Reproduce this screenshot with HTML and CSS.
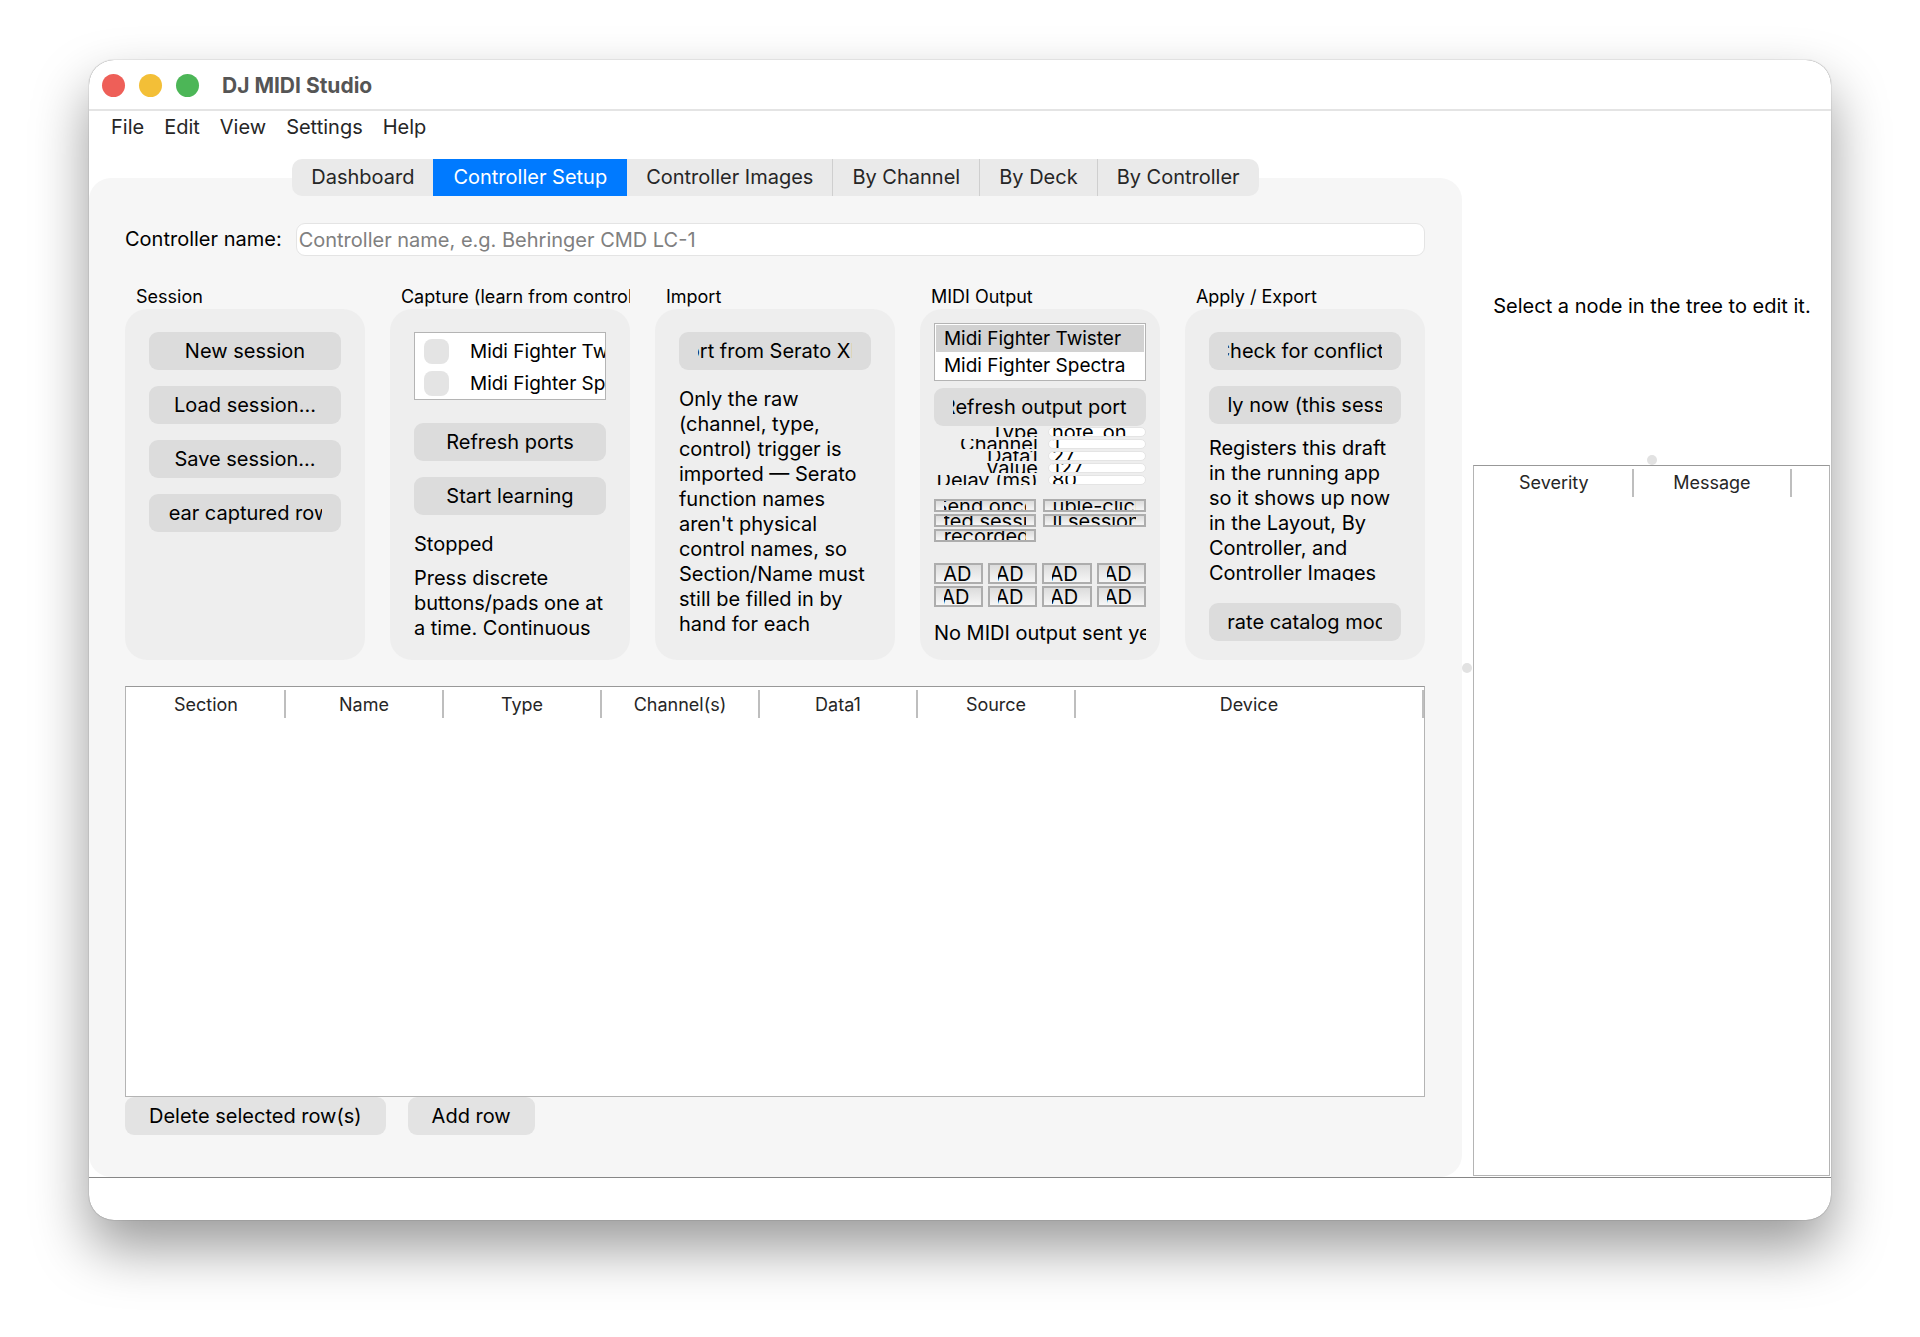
FILE: index.html
```html
<!DOCTYPE html>
<html lang="en">
<head>
  <meta charset="UTF-8" />
  <meta name="viewport" content="width=device-width, initial-scale=1" />
  <title>DJ MIDI Studio</title>
  <link rel="stylesheet" href="styles.css">
</head>
<body>

  <div class="window">
    <header class="titlebar">
      <button class="light red" aria-label="Close"></button>
      <button class="light yellow" aria-label="Minimize"></button>
      <button class="light green" aria-label="Zoom"></button>
      <h1>DJ MIDI Studio</h1>
    </header>

    <nav class="menubar">
      <button>File</button>
      <button>Edit</button>
      <button>View</button>
      <button>Settings</button>
      <button>Help</button>
    </nav>

    <div class="workspace">
      <main class="main">
        <div class="tabs" role="tablist">
          <button role="tab">Dashboard</button>
          <button role="tab" class="active" aria-selected="true">Controller Setup</button>
          <button role="tab">Controller Images</button>
          <button role="tab">By Channel</button>
          <button role="tab">By Deck</button>
          <button role="tab">By Controller</button>
        </div>

        <div class="pane">
          <div class="name-row">
            <label for="controller-name">Controller name:</label>
            <input type="text" id="controller-name" placeholder="Controller name, e.g. Behringer CMD LC-1">
          </div>

          <div class="groups">
            <section class="group">
              <h2>Session</h2>
              <div class="box">
                <button class="btn"><span>New session</span></button>
                <button class="btn"><span>Load session...</span></button>
                <button class="btn"><span>Save session...</span></button>
                <button class="btn"><span>Clear captured rows</span></button>
              </div>
            </section>

            <section class="group">
              <h2>Capture (learn from controller)</h2>
              <div class="box">
                <div class="ports">
                  <label><input type="checkbox"> Midi Fighter Twister</label>
                  <label><input type="checkbox"> Midi Fighter Spectra</label>
                </div>
                <button class="btn"><span>Refresh ports</span></button>
                <button class="btn"><span>Start learning</span></button>
                <p class="status">Stopped</p>
                <p class="note">Press discrete buttons/pads one at a time. Continuous</p>
              </div>
            </section>

            <section class="group">
              <h2>Import</h2>
              <div class="box">
                <button class="btn"><span>Import from Serato XML...</span></button>
                <p class="note">Only the raw (channel, type, control) trigger is imported — Serato function names aren't physical control names, so Section/Name must still be filled in by hand for each</p>
              </div>
            </section>

            <section class="group">
              <h2>MIDI Output</h2>
              <div class="box output">
                <ul class="devices">
                  <li class="selected">Midi Fighter Twister</li>
                  <li>Midi Fighter Spectra</li>
                </ul>
                <button class="btn"><span>Refresh output ports</span></button>
                <div class="fields">
                  <label for="msg-type">Type</label>
                  <input type="text" id="msg-type" value="note_on">
                  <label for="msg-channel">Channel</label>
                  <input type="text" id="msg-channel" value="1">
                  <label for="msg-data1">Data1</label>
                  <input type="text" id="msg-data1" value="27">
                  <label for="msg-value">Value</label>
                  <input type="text" id="msg-value" value="127">
                  <label for="msg-delay">Delay (ms)</label>
                  <input type="text" id="msg-delay" value="80">
                </div>
                <div class="sends">
                  <button class="mini"><span>Send once</span></button>
                  <button class="mini"><span>Double-click...</span></button>
                  <button class="mini"><span>Selected sessions...</span></button>
                  <button class="mini"><span>All sessions</span></button>
                  <button class="mini"><span>Send recorded rows</span></button>
                </div>
                <div class="pads">
                  <button class="mini"><span>PAD 1</span></button>
                  <button class="mini"><span>PAD 2</span></button>
                  <button class="mini"><span>PAD 3</span></button>
                  <button class="mini"><span>PAD 4</span></button>
                  <button class="mini"><span>PAD 5</span></button>
                  <button class="mini"><span>PAD 6</span></button>
                  <button class="mini"><span>PAD 7</span></button>
                  <button class="mini"><span>PAD 8</span></button>
                </div>
                <p class="sent">No MIDI output sent yet</p>
              </div>
            </section>

            <section class="group">
              <h2>Apply / Export</h2>
              <div class="box">
                <button class="btn"><span>Check for conflicts</span></button>
                <button class="btn"><span>Apply now (this session)</span></button>
                <p class="note short">Registers this draft in the running app so it shows up now in the Layout, By Controller, and Controller Images</p>
                <button class="btn last"><span>Generate catalog module...</span></button>
              </div>
            </section>
          </div>

          <div class="table-frame">
            <table>
              <thead>
                <tr>
                  <th>Section</th>
                  <th>Name</th>
                  <th>Type</th>
                  <th>Channel(s)</th>
                  <th>Data1</th>
                  <th>Source</th>
                  <th class="rest">Device</th>
                </tr>
              </thead>
            </table>
          </div>

          <div class="row-actions">
            <button class="btn">Delete selected row(s)</button>
            <button class="btn">Add row</button>
          </div>
        </div>
      </main>

      <div class="splitter"></div>

      <aside class="side">
        <div class="detail">Select a node in the tree to edit it.</div>
        <div class="splitter"></div>
        <div class="table-frame issues">
          <table>
            <thead>
              <tr>
                <th>Severity</th>
                <th>Message</th>
                <th class="rest"></th>
              </tr>
            </thead>
          </table>
        </div>
      </aside>
    </div>

    <footer class="statusbar"></footer>
  </div>

</body>
</html>
```
FILE: styles.css
```css
* {
  box-sizing: border-box;
}

body {
  margin: 0;
  min-height: 100vh;
  padding: 60px 89px 117px;
  display: flex;
  background: #fff;
  color: #000;
  font-family: Inter, "Liberation Sans", sans-serif;
  font-size: 20px;
  line-height: 25px;
}

h1,
h2,
p,
ul {
  margin: 0;
  padding: 0;
}

button,
input {
  font: inherit;
  color: inherit;
  margin: 0;
  padding: 0;
  border: none;
}

.window {
  flex: 1;
  min-width: 0;
  display: flex;
  flex-direction: column;
  background: #fff;
  border-radius: 25px;
  overflow: hidden;
  box-shadow: 0 0 1px rgba(0, 0, 0, 0.6), 0 28px 56px rgba(0, 0, 0, 0.4);
}

.titlebar {
  display: flex;
  align-items: center;
  gap: 14px;
  height: 51px;
  padding: 2px 0 0 13px;
  border-bottom: 2px solid #e4e4e4;
}

.light {
  width: 23px;
  height: 23px;
  border-radius: 50%;
}

.red { background: #ee5f58; }
.yellow { background: #f3bf37; }
.green { background: #4cb657; }

.titlebar h1 {
  margin-left: 9px;
  font-size: 21px;
  font-weight: 700;
  color: #555;
}

.menubar {
  display: flex;
  gap: 20px;
  height: 33px;
  padding-left: 22px;
}

.menubar button {
  background: none;
  color: #262626;
}

.workspace {
  flex: 1;
  display: grid;
  grid-template-columns: minmax(0, 23fr) 11px minmax(0, 6fr);
  margin-top: 15px;
}

.main {
  display: flex;
  flex-direction: column;
}

/* the tab bar straddles the top edge of the pane */
.tabs {
  position: relative;
  z-index: 1;
  align-self: center;
  display: flex;
  height: 37px;
  margin-bottom: -18px;
  border-radius: 10px;
  overflow: hidden;
  background: #eaeaea;
}

.tabs button {
  padding: 0 19px;
  background: none;
  color: #262626;
}

.tabs button + button {
  border-left: 1px solid #cfcfcf;
}

.tabs .active,
.tabs .active + button {
  border-left: none;
}

.tabs .active {
  padding: 0 20px;
  background: #007aff;
  color: #fff;
}

.pane {
  flex: 1;
  display: flex;
  flex-direction: column;
  padding: 45px 37px 42px 36px;
  background: #f6f6f6;
  border-radius: 22px;
}

.name-row {
  display: flex;
  align-items: center;
  gap: 14px;
}

.name-row input {
  flex: 1;
  height: 33px;
  padding: 0 2px;
  background: #fff;
  border: 1px solid #e4e4e4;
  border-radius: 9px;
}

.name-row input::placeholder {
  color: #808080;
}

.groups {
  display: grid;
  grid-template-columns: repeat(5, minmax(0, 1fr));
  gap: 25px;
  margin-top: 29px;
}

.group {
  display: flex;
  flex-direction: column;
}

.group h2 {
  padding-left: 11px;
  font-size: 18px;
  font-weight: 400;
  line-height: 24px;
  white-space: nowrap;
  overflow: hidden;
}

.box {
  flex: 1;
  display: flex;
  flex-direction: column;
  padding: 23px 24px 19px;
  background: #eee;
  border-radius: 22px;
}

.btn {
  height: 38px;
  padding: 0 19px;
  border-radius: 9px;
  background: #dcdcdc;
}

/* long captions are cut evenly on both sides */
.btn span,
.mini span {
  display: flex;
  justify-content: center;
  white-space: nowrap;
  overflow: hidden;
}

.btn + .btn {
  margin-top: 16px;
}

.ports {
  height: 68px;
  margin-bottom: 23px;
  padding: 2px 0 0 9px;
  background: #fff;
  border: 1px solid #b4b4b4;
  font-size: 19px;
  overflow: hidden;
}

.ports label {
  display: flex;
  align-items: center;
  gap: 21px;
  height: 32px;
  white-space: nowrap;
}

.ports input {
  appearance: none;
  flex: none;
  width: 25px;
  height: 25px;
  border-radius: 8px;
  background: #e4e4e4;
}

.status {
  margin-top: 17px;
}

.note {
  margin-top: 9px;
}

.btn + .note {
  margin-top: 17px;
}

.btn + .note.short {
  height: 145px;
  margin-top: 12px;
  overflow: hidden;
}

.last {
  margin-top: 22px;
}

.output {
  padding: 14px;
}

.devices {
  list-style: none;
  height: 58px;
  padding: 1px;
  background: #fff;
  border: 1px solid #b4b4b4;
  font-size: 19px;
}

.devices li {
  padding-left: 8px;
  line-height: 27px;
  white-space: nowrap;
  overflow: hidden;
}

.devices .selected {
  background: #d2d2d2;
}

.output .btn {
  margin-top: 7px;
}

.fields {
  display: grid;
  grid-template-columns: minmax(0, 1fr) 98px;
  grid-auto-rows: 10px;
  gap: 2px 10px;
  margin-top: 1px;
}

.fields label {
  display: flex;
  align-items: center;
  justify-content: flex-end;
  white-space: nowrap;
  overflow: hidden;
}

.fields input {
  width: 100%;
  height: 10px;
  padding: 0 3px;
  background: #fff;
  border: 1px solid #e4e4e4;
  border-radius: 5px;
  overflow: hidden;
}

.sends {
  display: grid;
  grid-template-columns: repeat(2, minmax(0, 1fr));
  grid-auto-rows: 13px;
  gap: 2px 7px;
  margin-top: 14px;
}

.pads {
  display: grid;
  grid-template-columns: repeat(4, minmax(0, 1fr));
  grid-auto-rows: 21px;
  gap: 2px 5px;
  margin-top: 21px;
}

.mini {
  display: flex;
  align-items: center;
  padding: 2px 8px 0;
  border: 2px solid #adadad;
  background: linear-gradient(#dcdcdc, #f6f6f6);
  overflow: hidden;
}

.mini span {
  flex: 1;
  min-width: 0;
}

.sent {
  margin-top: 14px;
  white-space: nowrap;
  overflow: hidden;
}

.table-frame {
  flex: 1;
  margin-top: 26px;
  padding-left: 2px;
  background: #fff;
  border: 1px solid #b4b4b4;
  border-top-color: #989898;
}

table {
  width: 100%;
  table-layout: fixed;
  border-collapse: separate;
  border-spacing: 0 3px;
}

th {
  width: 158px;
  height: 28px;
  padding: 0;
  border-right: 2px solid #bebebe;
  color: #262626;
  font-size: 18px;
  font-weight: 400;
}

th.rest {
  width: auto;
}

.row-actions {
  display: flex;
  gap: 22px;
}

.row-actions .btn {
  margin: 0;
  padding: 0 24px;
  background: #e3e3e3;
}

.splitter {
  display: flex;
  align-items: center;
  justify-content: center;
}

.splitter::before {
  content: "";
  width: 10px;
  height: 10px;
  border-radius: 50%;
  background: #e2e2e2;
}

.side {
  display: flex;
  flex-direction: column;
}

.detail {
  flex: 5;
  display: flex;
  align-items: center;
  justify-content: center;
  white-space: nowrap;
}

.issues {
  flex: 12;
  margin: 0 1px 1px 0;
}

.issues .rest {
  border-right: none;
}

.statusbar {
  height: 43px;
  border-top: 1px solid #868686;
}
```
